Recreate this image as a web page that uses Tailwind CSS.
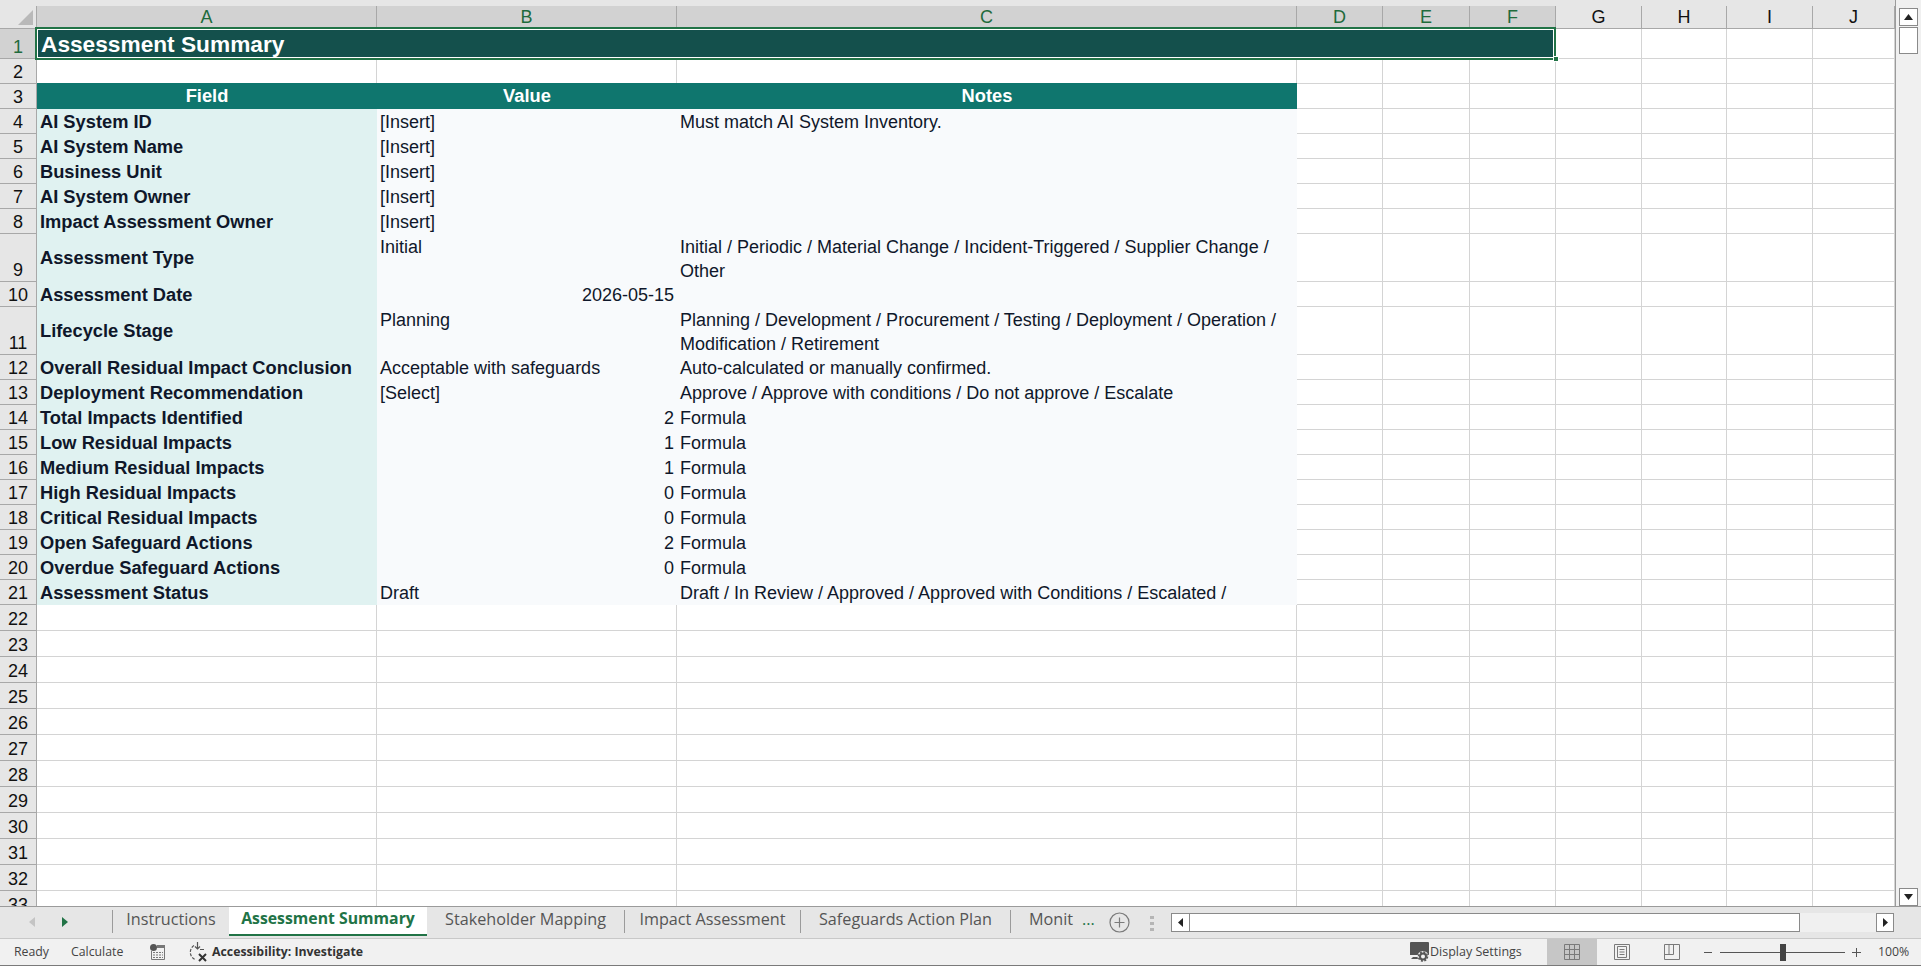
<!DOCTYPE html>
<html lang="en">
<head>
    <meta charset="UTF-8">
    <title>Assessment Summary</title>
    <script src="https://cdn.jsdelivr.net/npm/@tailwindcss/browser@4"></script>
</head>
<body class="bg-white overflow-hidden">
<div class="w-[1921px] h-[966px] flex flex-col overflow-hidden font-['Liberation_Sans',Arial,sans-serif] text-[#0f172a]">

    <!-- sheet + vertical scrollbar -->
    <div class="flex h-[906px] shrink-0">
        <div class="w-[1895px] h-[906px] overflow-hidden bg-[#e6e6e6] pt-[6px]">
            <div id="sheet" class="grid grid-cols-[37px_340px_300px_620px_86px_87px_86px_86px_85px_86px_82px] grid-rows-[23px_30px_25px_repeat(6,25px)_48px_25px_48px_repeat(10,25px)_repeat(12,26px)]"></div>
        </div>
        <div class="w-[26px] bg-[#f0f0f0] border-l border-[#9b9b9b] flex flex-col items-center relative">
            <div class="mt-[8px] w-[19px] h-[18px] bg-white border border-[#8a8a8a] flex items-center justify-center">
                <svg width="9" height="6" viewBox="0 0 9 6"><path d="M4.5 0L9 6H0z" fill="#222"/></svg>
            </div>
            <div class="mt-[1px] w-[19px] h-[27px] bg-white border border-[#8a8a8a]"></div>
            <div class="mt-auto w-[19px] h-[18px] bg-white border border-[#8a8a8a] flex items-center justify-center">
                <svg width="9" height="6" viewBox="0 0 9 6"><path d="M4.5 6L9 0H0z" fill="#222"/></svg>
            </div>
        </div>
    </div>

    <!-- sheet tabs -->
    <div class="h-[32px] shrink-0 bg-[#e6e6e6] border-t border-[#9b9b9b] flex items-start font-['Open_Sans',sans-serif] text-[16.2px] text-[#555]">
        <div class="w-[113px] h-[23px] mt-[3px] border-r border-[#9b9b9b] flex items-center">
            <svg class="ml-[29px]" width="7" height="10" viewBox="0 0 7 10"><path d="M6 0L0 5l6 5z" fill="#c4c4c4"/></svg>
            <svg class="ml-[25px]" width="7" height="10" viewBox="0 0 7 10"><path d="M1 0l6 5-6 5z" fill="#217346"/></svg>
        </div>
        <div class="w-[116px] h-[23px] mt-[3px] pb-[4px] flex items-center justify-center leading-none">Instructions</div>
        <div class="w-[198px] h-[29px] bg-white border-b-2 border-[#217346] flex items-center justify-center font-bold text-[15.8px] text-[#217346] leading-none pb-[3px]">Assessment Summary</div>
        <div class="w-[198px] h-[23px] mt-[3px] pb-[4px] border-r border-[#9b9b9b] flex items-center justify-center leading-none">Stakeholder Mapping</div>
        <div class="w-[176px] h-[23px] mt-[3px] pb-[4px] border-r border-[#9b9b9b] flex items-center justify-center leading-none">Impact Assessment</div>
        <div class="w-[210px] h-[23px] mt-[3px] pb-[4px] border-r border-[#9b9b9b] flex items-center justify-center leading-none">Safeguards Action Plan</div>
        <div class="w-[92px] h-[23px] mt-[3px] pb-[4px] flex items-center pl-[18px] leading-none whitespace-nowrap">Monit<span class="ml-[9px] text-[#217346]">...</span></div>
        <svg class="mt-[5px] ml-[6px]" width="21" height="21" viewBox="0 0 21 21" fill="none" stroke="#7a7a7a"><circle cx="10.5" cy="10.5" r="9.5" stroke-width="1.2"/><path d="M10.5 5.5v10M5.5 10.5h10" stroke-width="1.2"/></svg>
        <div class="ml-[20px] mt-[9px] flex flex-col gap-[3px]">
            <div class="w-[4px] h-[3px] bg-[#b5b5b5]"></div>
            <div class="w-[4px] h-[3px] bg-[#b5b5b5]"></div>
            <div class="w-[4px] h-[3px] bg-[#b5b5b5]"></div>
        </div>
        <!-- horizontal scrollbar -->
        <div class="ml-[17px] mt-[6px] w-[723px] h-[19px] bg-[#f0f0f0] flex">
            <div class="w-[19px] h-[19px] bg-white border border-[#8a8a8a] flex items-center justify-center">
                <svg width="5" height="9" viewBox="0 0 5 9"><path d="M5 0v9L0 4.5z" fill="#222"/></svg>
            </div>
            <div class="w-[611px] h-[19px] -ml-px bg-white border border-[#8a8a8a]"></div>
            <div class="ml-auto w-[18px] h-[19px] bg-white border border-[#8a8a8a] flex items-center justify-center">
                <svg width="5" height="9" viewBox="0 0 5 9"><path d="M0 0v9l5-4.5z" fill="#222"/></svg>
            </div>
        </div>
    </div>

    <!-- status bar -->
    <div class="h-[28px] shrink-0 bg-[#f1f1f1] border-t border-[#c8c8c8] border-b border-b-[#7a7a7a] flex items-center font-['Open_Sans',sans-serif] text-[12.3px] text-[#444]">
        <span class="ml-[14px] w-[57px]">Ready</span>
        <span class="w-[79px]">Calculate</span>
        <svg width="15" height="16" viewBox="0 0 15 16" fill="none"><circle cx="3.5" cy="3.5" r="3.5" fill="#555"/><path d="M7 1h8v3H7z" fill="#777"/><path d="M1.5 7v8.5h13V4" stroke="#777"/><path d="M3 8.5h10M3 11h10M3 13.5h10" stroke="#777" stroke-dasharray="2 1"/></svg>
        <svg class="ml-[23px]" width="21" height="20" viewBox="0 0 21 20" fill="none" stroke="#555" stroke-width="1.2"><path d="M6 3.5a8 8 0 0 0 1 14" stroke-dasharray="3 1.5"/><path d="M9.5 0v7M7 4.5L9.5 7 12 4.5M12 7.5h4"/><path d="M11 12l7 7M18 12l-7 7" stroke="#333" stroke-width="2"/></svg>
        <span class="ml-[3px] font-bold text-[#333] whitespace-nowrap">Accessibility: Investigate</span>
        <div class="ml-auto w-[511px] h-full flex items-center">
            <svg width="19" height="20" viewBox="0 0 19 20"><path d="M1 0h17a1 1 0 0 1 1 1v12H0V1a1 1 0 0 1 1-1z" fill="#555"/><path d="M3 15h6v2H1z" fill="#555"/><circle cx="13" cy="14.5" r="5.5" fill="#f1f1f1"/><circle cx="13" cy="14.5" r="3" fill="none" stroke="#555" stroke-width="2"/><circle cx="13" cy="14.5" r="4.5" fill="none" stroke="#555" stroke-width="1.5" stroke-dasharray="2 1.5"/></svg>
            <span class="ml-[1px] w-[117px] whitespace-nowrap text-[12.5px]">Display Settings</span>
            <div class="w-[50px] h-full bg-[#c6c6c6] flex items-center justify-center">
                <svg width="16" height="16" viewBox="0 0 16 16" fill="none" stroke="#7a7a7a"><path d="M.5.5h15v15H.5zM.5 5.5h15M.5 10.5h15M5.5.5v15M10.5.5v15"/></svg>
            </div>
            <div class="w-[50px] flex justify-center">
                <svg width="16" height="16" viewBox="0 0 16 16" fill="none" stroke="#7a7a7a"><path d="M.5.5h15v15H.5zM3.5 2.5h9v11h-9zM5.5 5.5h5M5.5 8h5M5.5 10.5h5"/></svg>
            </div>
            <div class="w-[50px] flex justify-center">
                <svg width="16" height="16" viewBox="0 0 16 16" fill="none" stroke="#7a7a7a"><path d="M.5.5h15v15H.5zM.5 10.5h9V.5M5 .5v10"/></svg>
            </div>
            <div class="ml-[7px] w-[8px] h-px bg-[#555]"></div>
            <div class="ml-[8px] w-[125px] h-px bg-[#555] relative">
                <div class="absolute left-[60px] -top-[8px] w-[6px] h-[17px] bg-[#444]"></div>
            </div>
            <svg class="ml-[7px]" width="9" height="9" viewBox="0 0 9 9" stroke="#555"><path d="M0 4.5h9M4.5 0v9"/></svg>
            <span class="ml-[17px]">100%</span>
        </div>
    </div>
</div>

<script>
    const letters = ['A', 'B', 'C', 'D', 'E', 'F', 'G', 'H', 'I', 'J'];

    // field, value, notes, value align (r = number/date)
    const data = {
        4: ['AI System ID', '[Insert]', 'Must match AI System Inventory.'],
        5: ['AI System Name', '[Insert]', ''],
        6: ['Business Unit', '[Insert]', ''],
        7: ['AI System Owner', '[Insert]', ''],
        8: ['Impact Assessment Owner', '[Insert]', ''],
        9: ['Assessment Type', 'Initial', 'Initial / Periodic / Material Change / Incident-Triggered / Supplier Change / Other', 'wrap'],
        10: ['Assessment Date', '2026-05-15', '', 'r'],
        11: ['Lifecycle Stage', 'Planning', 'Planning / Development / Procurement / Testing / Deployment / Operation / Modification / Retirement', 'wrap'],
        12: ['Overall Residual Impact Conclusion', 'Acceptable with safeguards', 'Auto-calculated or manually confirmed.'],
        13: ['Deployment Recommendation', '[Select]', 'Approve / Approve with conditions / Do not approve / Escalate'],
        14: ['Total Impacts Identified', '2', 'Formula', 'r'],
        15: ['Low Residual Impacts', '1', 'Formula', 'r'],
        16: ['Medium Residual Impacts', '1', 'Formula', 'r'],
        17: ['High Residual Impacts', '0', 'Formula', 'r'],
        18: ['Critical Residual Impacts', '0', 'Formula', 'r'],
        19: ['Open Safeguard Actions', '2', 'Formula', 'r'],
        20: ['Overdue Safeguard Actions', '0', 'Formula', 'r'],
        21: ['Assessment Status', 'Draft', 'Draft / In Review / Approved / Approved with Conditions / Escalated /', ''],
    };

    const base = 'min-w-0 overflow-hidden text-[18px] leading-[24px]';
    const bold = 'min-w-0 overflow-hidden text-[18.3px] leading-[24px] font-bold';
    const head = 'min-w-0 overflow-hidden text-[18.3px] leading-[24px] font-bold -mt-px pt-px bg-[#0f766e] text-white text-center';
    const grid = 'border-r border-b border-[#d4d4d4] bg-white';
    const colHead = 'flex items-center justify-center text-[18px] leading-none border-r border-b border-[#a8a8a8]';
    const rowHead = 'flex items-end justify-center text-[18px] leading-[22px] border-r border-b border-[#a8a8a8]';
    let html = '';

    // header row
    html += '<div class="border-r border-b border-[#a8a8a8] relative"><svg class="absolute left-[18px] top-[4px]" width="15" height="15" viewBox="0 0 15 15"><path d="M15 0v15H0z" fill="#b9b9b9"/></svg></div>';
    letters.forEach((l, i) => {
        html += i < 6
            ? `<div class="${colHead} bg-[#d2d2d2] text-[#1f6b3c]">${l}</div>`
            : `<div class="${colHead} bg-[#e6e6e6] text-[#111]">${l}</div>`;
    });

    for (let r = 1; r <= 33; r++) {
        html += r === 1
            ? `<div class="${rowHead} bg-[#d2d2d2] text-[#1f6b3c]">${r}</div>`
            : `<div class="${rowHead} bg-[#e6e6e6] text-[#111]">${r}</div>`;

        let from = 0;
        if (r === 1) {
            html += `<div class="col-span-6 relative z-10 bg-[#14504c] text-white font-bold text-[22.7px] leading-[30px] pl-[4px]">Assessment Summary
                <div class="absolute -left-[2px] -top-[2px] right-0 -bottom-[1px] border-2 border-[#217346] shadow-[inset_0_0_0_1px_#fff]"></div>
                <div class="absolute -right-[3px] -bottom-[3px] w-[6px] h-[6px] bg-[#217346] border border-white"></div>
            </div>`;
            from = 6;
        } else if (r === 3) {
            html += `<div class="${head}">Field</div>`;
            html += `<div class="${head}">Value</div>`;
            html += `<div class="${head}">Notes</div>`;
            from = 3;
        } else if (data[r]) {
            const [field, value, notes, mode] = data[r];
            html += `<div class="${bold} bg-[#e0f2f1] flex items-center pl-[3px] whitespace-nowrap">${field}</div>`;
            if (mode === 'r') {
                html += `<div class="${base} bg-[#f8fafc] flex items-center justify-end pr-[3px]">${value}</div>`;
            } else if (mode === 'wrap') {
                html += `<div class="${base} bg-[#f8fafc] pt-[1px] pl-[3px]">${value}</div>`;
            } else {
                html += `<div class="${base} bg-[#f8fafc] flex items-center pl-[3px] whitespace-nowrap">${value}</div>`;
            }
            html += mode === 'wrap'
                ? `<div class="${base} bg-[#f8fafc] pt-[1px] pl-[3px]">${notes}</div>`
                : `<div class="${base} bg-[#f8fafc] flex items-center pl-[3px] whitespace-nowrap">${notes}</div>`;
            from = 3;
        }
        for (let c = from; c < letters.length; c++) {
            html += `<div class="${grid}"></div>`;
        }
    }
    document.getElementById('sheet').innerHTML = html;
</script>
</body>
</html>
